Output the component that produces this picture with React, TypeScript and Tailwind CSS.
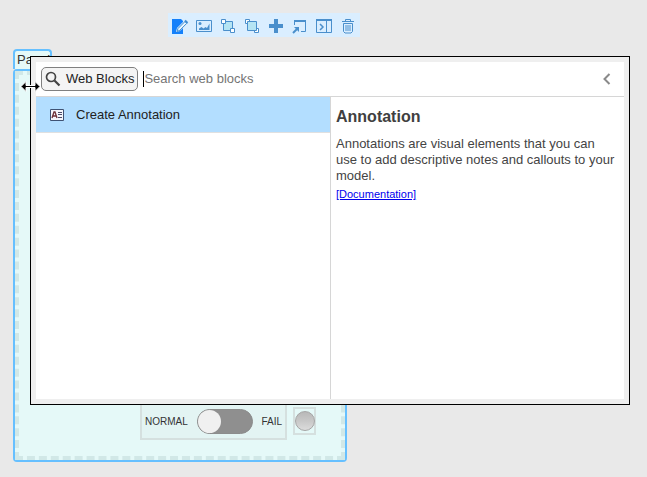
import type { ReactNode } from "react";

type Tool = {
  name: string;
  icon: ReactNode;
};

const tools: Tool[] = [
  {
    name: "Edit",
    icon: (
      <>
        <path d="M4 6h9l2 2v13H4z" fill="#1480fa" />
        <path d="M8.500 18.500l1-3.500 8-8 2.500 2.500-8 8z" fill="#daeeff" stroke="#daeeff" />
        <path d="M9 18.500l1-3 7-7 1.800 1.800-7 7z" fill="#eaf6ff" stroke="#3f8cd0" />
        <path d="M17 7.500l2.500 2.500" stroke="#3f8cd0" strokeWidth="2" />
      </>
    ),
  },
  {
    name: "Image",
    icon: (
      <>
        <path d="M4.500 7.500h15v11h-15z" fill="none" stroke="#4a8fcc" />
        <circle cx="8" cy="10.500" r="1.500" fill="#4a8fcc" />
        <path d="M7 17v-1.500l2.500-1.500 2 1.500 2-1.500 1.500 1 2.500-4.500V17z" fill="#4a8fcc" />
      </>
    ),
  },
  {
    name: "Bring to front",
    icon: (
      <g stroke="#4a8fcc">
        <path d="M7.500 8.500h9v9h-9z" fill="#b5e4f3" />
        <path d="M5.500 6.500h4v4h-4zM14.500 15.500h4v4h-4z" fill="#fff" />
      </g>
    ),
  },
  {
    name: "Send to back",
    icon: (
      <g stroke="#4a8fcc">
        <path d="M5.500 6.500h4v4h-4zM14.500 15.500h4v4h-4z" fill="#fff" />
        <path d="M7.500 8.500h9v9h-9z" fill="#b5e4f3" />
      </g>
    ),
  },
  {
    name: "Add",
    icon: <path d="M10 6h4v5h5v4h-5v5h-4v-5H5v-4h5z" fill="#4a8fcc" />,
  },
  {
    name: "Move out",
    icon: (
      <>
        <path d="M6.500 12V7.500h11v11H13" fill="none" stroke="#4a8fcc" />
        <path d="M6 7h12v2H6z" fill="#4a8fcc" />
        <path d="M5 20l4.500-4.500" stroke="#4a8fcc" strokeWidth="2" />
        <path d="M6 14H11V19z" fill="#4a8fcc" />
      </>
    ),
  },
  {
    name: "Open panel",
    icon: (
      <>
        <path d="M4.500 7.500h15v12h-15zM14.500 7.500v12" fill="none" stroke="#4a8fcc" />
        <path d="M4 6h16v2H4z" fill="#4a8fcc" />
        <path d="M8 11l3 3-3 3" fill="none" stroke="#4a8fcc" strokeWidth="1.500" />
      </>
    ),
  },
  {
    name: "Delete",
    icon: (
      <g fill="none" stroke="#4a8fcc">
        <path d="M6 8.500h12M9.500 8V6.500h5V8M7.500 10.500h9v8l-1.500 1.500h-6l-1.500-1.500z" />
        <path d="M10 12v6M12 12v6M14 12v6" />
      </g>
    ),
  },
];

function Toolbar() {
  return (
    <div role="toolbar" className="flex w-fit bg-[#daeeff]">
      {tools.map((tool) => (
        <button key={tool.name} type="button" aria-label={tool.name} className="size-6">
          <svg viewBox="0 0 24 24" className="size-6">
            {tool.icon}
          </svg>
        </button>
      ))}
    </div>
  );
}

function Panel() {
  return (
    <section className="w-[334px]">
      <h2 className="h-5 w-[39px] overflow-hidden rounded-t border-2 border-b-0 border-[#66c0ff] bg-[#e5f9f8] pl-0.5 text-[13px] leading-[18px] text-[#333]">
        Panel
      </h2>
      <div className="rounded border-2 border-[#66c0ff] bg-[#e5f9f8]">
        <div className="flex h-[389px] items-end gap-1.5 border-4 border-dashed border-[#d1e8e7] pb-4 pl-[121px]">
          <label className="flex h-[37px] w-[147px] items-center justify-between border-2 border-[#d5e0df] bg-[#e3f4f3] px-[3px] text-[10px] text-[#333]">
            NORMAL
            <input type="checkbox" role="switch" aria-label="Normal or fail" className="peer sr-only" />
            <span className="h-[25px] w-14 rounded-full border border-[#8c8c8c] bg-[#8f8f8f]">
              <span className="block size-[23px] rounded-full bg-[#f0f0f0]" />
            </span>
            FAIL
          </label>
          <div className="mb-[5px] flex h-7 w-[23px] items-center justify-center border-2 border-[#d5e0df]">
            <span className="size-5 shrink-0 rounded-full border border-[#a5a5a5] bg-linear-to-b from-[#b8b8b8] via-[#c8c8c8] to-[#dcdcdc]" />
          </div>
        </div>
      </div>
    </section>
  );
}

function SearchHeader() {
  return (
    <header className="flex h-[35px] items-center border-b border-[#d6d6d6] pl-[5px]">
      <button
        type="button"
        className="flex h-6 items-center gap-1 rounded-[5px] border border-[#808080] bg-[#f4f4f4] px-[3px] text-[13px] text-[#222]"
      >
        <svg viewBox="1 0 17 18" className="h-[18px] w-[17px]" fill="none" stroke="#444">
          <circle cx="7" cy="7" r="4.500" strokeWidth="1.700" />
          <path d="M10.500 10.500l5 5" strokeWidth="2.200" />
        </svg>
        Web Blocks
      </button>
      <span className="ml-[5px] h-4 w-px bg-black" />
      <input
        type="text"
        aria-label="Search web blocks"
        placeholder="Search web blocks"
        className="min-w-0 flex-1 text-[13px] text-[#222] outline-none placeholder:text-[#757575]"
      />
      <button type="button" aria-label="Back" className="mr-[9px] flex size-4 items-center justify-center">
        <svg viewBox="0 0 16 16" className="size-4" fill="none" stroke="#8a8a8a" strokeWidth="2">
          <path d="M10.500 3L5.500 8l5 5" />
        </svg>
      </button>
    </header>
  );
}

function AnnotationIcon() {
  return (
    <svg viewBox="0 0 14 12" className="h-3 w-3.5">
      <path d="M.5 .5h13v11H.5z" fill="#f4f6fc" stroke="#3f5273" />
      <path d="M2 9l2-6h1l2 6M3 7h3" fill="none" stroke="#6d3037" strokeWidth="1.300" />
      <path d="M8 3.500h4M8 5.500h4M8 8.500h4" stroke="#4b4b68" />
    </svg>
  );
}

function BlockSearch() {
  return (
    <div className="absolute top-14 right-[17px] left-[30px] border border-black bg-[#efefef] p-[5px]">
      <div className="bg-white">
        <SearchHeader />
        <div className="grid h-[302px] grid-cols-[295px_1fr]">
          <ul className="border-r border-[#d6d6d6]">
            <li className="border-b border-[#e0e0e0]">
              <button
                type="button"
                className="flex h-[35px] w-full items-center gap-3 bg-[#b3deff] pt-px pl-3.5 text-[13px] text-[#222]"
              >
                <AnnotationIcon />
                Create Annotation
              </button>
            </li>
          </ul>
          <article className="pt-2.5 pr-2 pl-[5px] text-[13px] leading-4 text-[#444]">
            <h3 className="mb-[9px] text-base leading-5 font-bold text-[#404040]">Annotation</h3>
            <p>
              Annotations are visual elements that you can use to add descriptive notes and callouts to your model.
            </p>
            <a href="#documentation" className="mt-0.5 block text-[11px] leading-4 text-[#0000ee] underline">
              [Documentation]
            </a>
          </article>
        </div>
      </div>
    </div>
  );
}

function ResizeCursor() {
  return (
    <svg viewBox="0 0 21 15" className="absolute top-[79px] left-5 h-[15px] w-[21px]">
      <path
        d="M1 7.500L6 2.500V6.500H15V2.500L20 7.500L15 12.500V8.500H6V12.500Z"
        fill="#000"
        stroke="#fff"
        strokeWidth="1"
      />
    </svg>
  );
}

export default function App() {
  return (
    <main className="relative min-h-screen bg-[#e9e9e9] pt-[13px] font-['Liberation_Sans',Arial,sans-serif]">
      <div className="pl-[168px]">
        <Toolbar />
      </div>
      <div className="mt-3 pl-[13px]">
        <Panel />
      </div>
      <BlockSearch />
      <ResizeCursor />
    </main>
  );
}
